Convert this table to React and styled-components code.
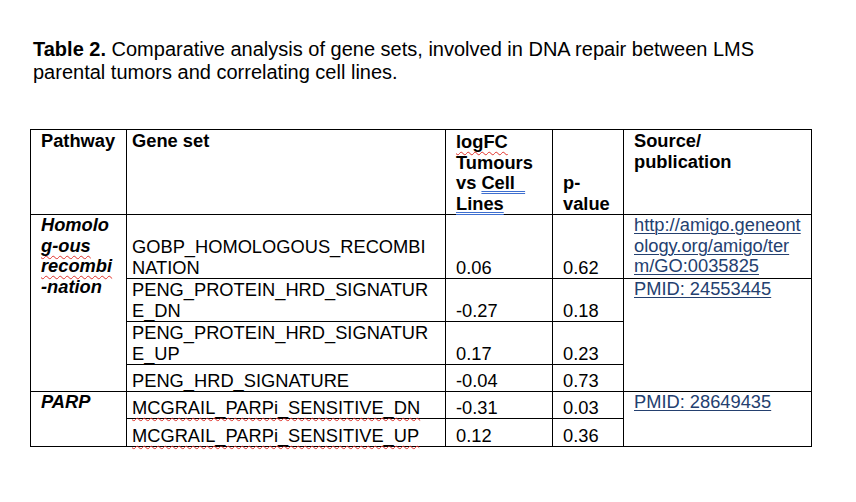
import styled, { createGlobalStyle } from "styled-components";

const GlobalStyle = createGlobalStyle`
  body {
    margin: 0;
    background: #fff;
    font-family: "Liberation Sans", Arial, sans-serif;
    color: #000;
  }
`;

const Page = styled.div`
  width: 856px;
  height: 502px;
  box-sizing: border-box;
  padding: 38px 0 0 30px;
`;

const Caption = styled.p`
  margin: 0 0 0 3px;
  font-size: 20px;
  line-height: 23px;
  height: 91px;

  strong {
    font-weight: 700;
  }
`;

const Table = styled.table`
  border-collapse: collapse;
  table-layout: fixed;
  width: 781px;
  font-size: 18.3px;
  line-height: 20.5px;
`;

const Row = styled.tr`
  height: ${(p) => p.$h}px;
`;

const Cell = styled.td`
  border: 1px solid #000;
  padding: ${(p) => (p.$head ? 1 : 0)}px 0 0 ${(p) => (p.$tight ? 5 : 10)}px;
  vertical-align: ${(p) => p.$align || "bottom"};
  font-weight: ${(p) => (p.$head || p.$bold ? 700 : 400)};
  font-style: ${(p) => (p.$italic ? "italic" : "normal")};
  white-space: nowrap;
`;

const Spell = styled.span`
  text-decoration: underline wavy #e0302a;
  text-decoration-thickness: 1px;
  text-decoration-skip-ink: none;
  text-underline-offset: 3px;
`;

const Grammar = styled.span`
  text-decoration: underline double #3e6fd0;
  text-decoration-thickness: 1px;
  text-decoration-skip-ink: none;
  text-underline-offset: 2px;
`;

const Ref = styled.a`
  color: #24406f;
  text-decoration: underline;
  text-decoration-thickness: 1px;
  text-underline-offset: 2px;
`;

export default function App() {
  return (
    <>
      <GlobalStyle />
      <Page>
        <Caption>
          <strong>Table 2.</strong> Comparative analysis of gene sets, involved in DNA repair between LMS
          <br />
          parental tumors and correlating cell lines.
        </Caption>
        <Table>
          <colgroup>
            <col style={{ width: 96 }} />
            <col style={{ width: 319 }} />
            <col style={{ width: 107 }} />
            <col style={{ width: 71 }} />
            <col style={{ width: 188 }} />
          </colgroup>
          <tbody>
            <Row $h={85}>
              <Cell $head $align="top">Pathway</Cell>
              <Cell $head $tight $align="top">Gene set</Cell>
              <Cell $head>
                <Spell>logFC</Spell>
                <br />
                Tumours
                <br />
                vs <Grammar>Cell&nbsp;&nbsp;</Grammar>
                <br />
                <Grammar>Lines</Grammar>
              </Cell>
              <Cell $head>
                p-
                <br />
                value
              </Cell>
              <Cell $head $align="top">
                Source/
                <br />
                publication
              </Cell>
            </Row>
            <Row $h={64}>
              <Cell $bold $italic $align="top" rowSpan={4}>
                Homolo
                <br />
                <Spell>g-ous</Spell>
                <br />
                <Spell>recombi</Spell>
                <br />
                -nation
              </Cell>
              <Cell $tight>
                GOBP_HOMOLOGOUS_RECOMBI
                <br />
                NATION
              </Cell>
              <Cell>0.06</Cell>
              <Cell>0.62</Cell>
              <Cell $align="top">
                <Ref href="#go">
                  http://amigo.geneont
                  <br />
                  ology.org/amigo/ter
                  <br />
                  m/GO:0035825
                </Ref>
              </Cell>
            </Row>
            <Row $h={43}>
              <Cell $tight>
                PENG_PROTEIN_HRD_SIGNATUR
                <br />
                E_DN
              </Cell>
              <Cell>-0.27</Cell>
              <Cell>0.18</Cell>
              <Cell $align="top" rowSpan={3}>
                <Ref href="#pmid1">PMID: 24553445</Ref>
              </Cell>
            </Row>
            <Row $h={43}>
              <Cell $tight>
                PENG_PROTEIN_HRD_SIGNATUR
                <br />
                E_UP
              </Cell>
              <Cell>0.17</Cell>
              <Cell>0.23</Cell>
            </Row>
            <Row $h={27}>
              <Cell $tight>PENG_HRD_SIGNATURE</Cell>
              <Cell>-0.04</Cell>
              <Cell>0.73</Cell>
            </Row>
            <Row $h={27}>
              <Cell $bold $italic $align="top" rowSpan={2}>PARP</Cell>
              <Cell $tight>
                <Spell>MCGRAIL_PARPi_SENSITIVE_DN</Spell>
              </Cell>
              <Cell>-0.31</Cell>
              <Cell>0.03</Cell>
              <Cell $align="top" rowSpan={2}>
                <Ref href="#pmid2">PMID: 28649435</Ref>
              </Cell>
            </Row>
            <Row $h={28}>
              <Cell $tight>
                <Spell>MCGRAIL_PARPi_SENSITIVE_UP</Spell>
              </Cell>
              <Cell>0.12</Cell>
              <Cell>0.36</Cell>
            </Row>
          </tbody>
        </Table>
      </Page>
    </>
  );
}
